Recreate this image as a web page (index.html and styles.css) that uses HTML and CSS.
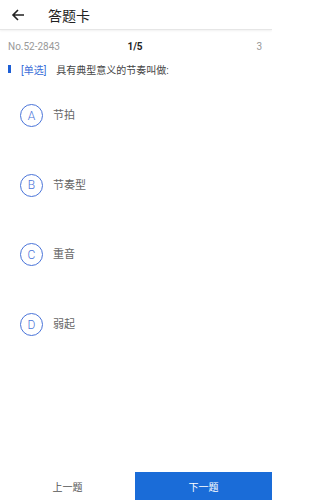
FILE: index.html
```html
<!DOCTYPE html>
<html lang="zh">
<head>
<meta charset="utf-8">
<link rel="stylesheet" href="styles.css">
</head>
<body>
<div class="page">
  <header class="topbar">
    <svg class="back" width="14" height="14" viewBox="0 0 14 14"><path d="M13 7H2M7 2L2 7l5 5" fill="none" stroke="#222" stroke-width="1.6"/></svg>
    <span class="title">答题卡</span>
  </header>
  <div class="info">
    <span class="no">No.52-2843</span>
    <span class="prog">1/5</span>
    <span class="num">3</span>
  </div>
  <div class="question">
    <span class="bar"></span>
    <span class="tag">[单选]</span>
    <span class="qtext">具有典型意义的节奏叫做:</span>
  </div>
  <ul class="options">
    <li class="opt"><span class="circle">A</span><span class="otext">节拍</span></li>
    <li class="opt"><span class="circle">B</span><span class="otext">节奏型</span></li>
    <li class="opt"><span class="circle">C</span><span class="otext">重音</span></li>
    <li class="opt"><span class="circle">D</span><span class="otext">弱起</span></li>
  </ul>
  <footer class="footer">
    <button class="btn prev">上一题</button>
    <button class="btn next">下一题</button>
  </footer>
</div>
</body>
</html>
```
FILE: styles.css
```css
* { box-sizing: border-box; margin: 0; padding: 0; }
html, body { width: 272px; height: 500px; overflow: hidden; background: #fff; }
body { font-family: Roboto, "Noto Sans CJK SC", sans-serif; color: #333; }
.page { display: flex; flex-direction: column; height: 500px; }
.topbar {
  height: 30px; display: flex; align-items: center; padding-left: 11px;
  border-bottom: 1px solid #e6e6e6; box-shadow: 0 1px 2px rgba(0,0,0,0.06);
}
.back { display: block; }
.title { margin-left: 23px; font-size: 14px; color: #222; }
.info {
  display: flex; align-items: center; justify-content: space-between;
  padding: 0 10px 0 8px; height: 33px; font-size: 10px;
}
.no { color: #999; width: 80px; }
.prog { color: #222; font-weight: bold; font-size: 10px; }
.num { color: #999; width: 80px; text-align: right; }
.question { display: flex; align-items: center; padding-left: 8px; height: 12px; font-size: 10px; }
.bar { width: 3px; height: 8px; background: #1d5fd6; }
.tag { color: #3a6ed8; margin-left: 10px; }
.qtext { color: #444; margin-left: 10px; }
.options { list-style: none; padding-top: 29px; flex: 1; }
.opt { display: flex; height: 69.7px; padding-left: 20px; align-items: flex-start; }
.circle {
  width: 23px; height: 23px; border: 1.2px solid #4a74d9; border-radius: 50%;
  display: flex; align-items: center; justify-content: center;
  color: #4a74d9; font-size: 12px; font-weight: 300;
}
.otext { margin-left: 10px; font-size: 11px; color: #666; line-height: 23px; }
.footer { display: flex; height: 28px; }
.btn { flex: 0 0 135px; border: none; font-family: inherit; font-size: 10px; }
.next { flex: 1; }
.prev { background: #fff; color: #555; }
.next { background: #1a6cd8; color: #fff; }
```
